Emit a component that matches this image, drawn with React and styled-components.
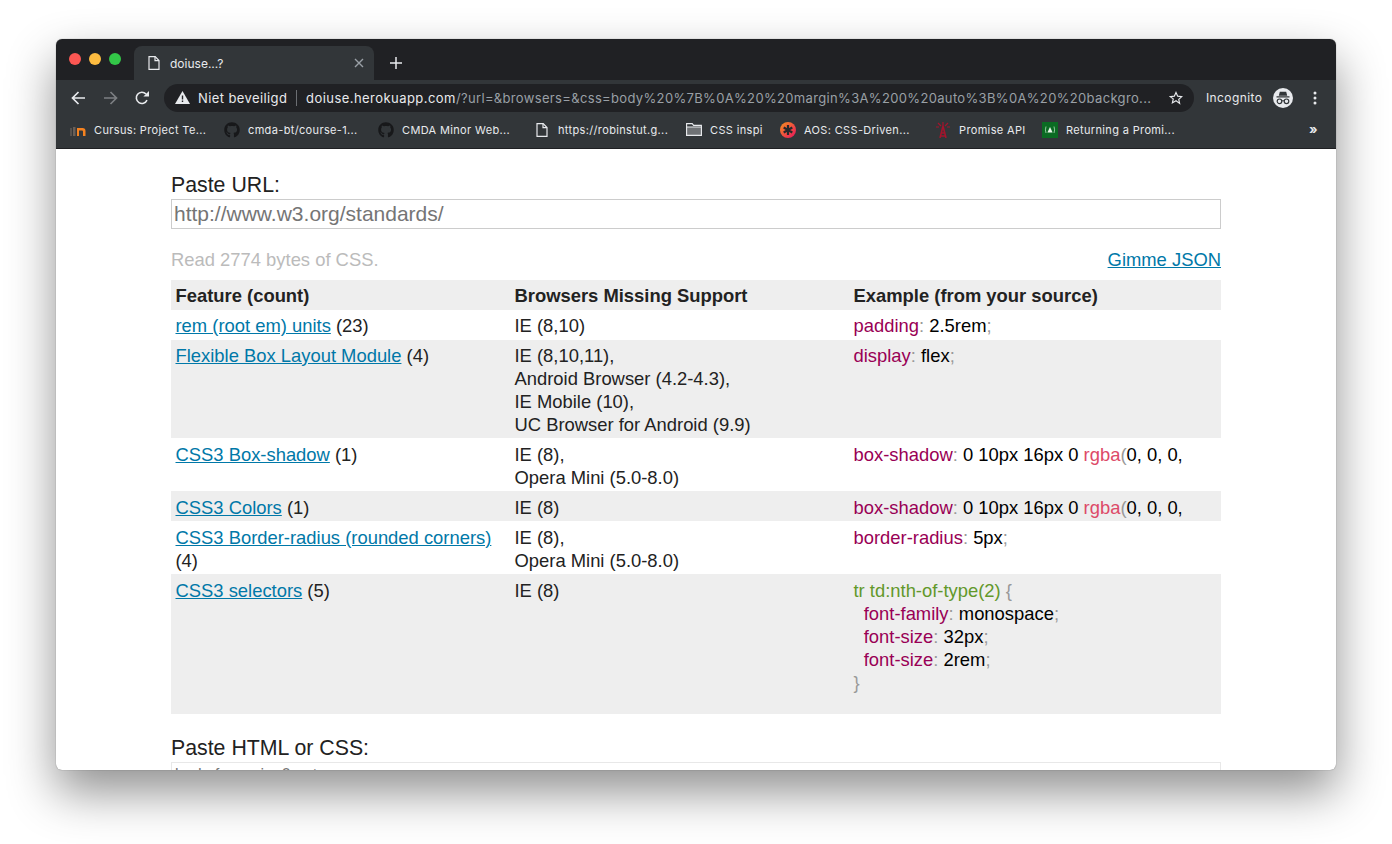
import React from 'react';
import styled, { createGlobalStyle } from 'styled-components';
import { FaGithub } from 'react-icons/fa';

const Global = createGlobalStyle`
  html, body {
    margin: 0;
    padding: 0;
    background: #fff;
  }
  body {
    height: 844px;
    overflow: hidden;
  }
`;

const Stage = styled.div`
  padding: 39px 56px 0;
`;

const Chrome = styled.div`
  width: 1280px;
  height: 731px;
  border-radius: 6px;
  overflow: hidden;
  display: flex;
  flex-direction: column;
  background: #fff;
  box-shadow: 0 0 1px rgba(0, 0, 0, 0.55), 0 22px 48px rgba(0, 0, 0, 0.44);
  font-family: Inter, "Liberation Sans", sans-serif;
`;

/* title strip */
const TabStrip = styled.div`
  height: 41px;
  background: #202124;
  display: flex;
  align-items: flex-end;
  padding-left: 13px;
  flex: none;
`;

const Lights = styled.div`
  display: flex;
  gap: 8px;
  align-self: flex-start;
  margin-top: 14px;
  margin-right: 13px;
`;

const Light = styled.span`
  width: 12px;
  height: 12px;
  border-radius: 50%;
  background: ${(p) => p.$color};
`;

const Tab = styled.div`
  width: 240px;
  height: 34px;
  background: #323639;
  border-radius: 8px 8px 0 0;
  display: flex;
  align-items: center;
  padding: 0 10px 0 14px;
  box-sizing: border-box;
  color: #e8eaed;
  font-size: 12px;
`;

const TabTitle = styled.span`
  flex: 1;
  margin-left: 10px;
`;

const NewTab = styled.div`
  height: 34px;
  margin-left: 16px;
  display: flex;
  align-items: center;
`;

/* toolbar with omnibox */
const Toolbar = styled.div`
  height: 35px;
  background: #323639;
  display: flex;
  align-items: center;
  flex: none;
  padding-left: 15px;
`;

const NavButton = styled.div`
  width: 14px;
  height: 14px;
  margin-right: ${(p) => p.$gap}px;
  display: flex;
`;

const Omnibox = styled.div`
  width: 1030px;
  height: 28px;
  border-radius: 14px;
  background: #202124;
  margin-left: 15px;
  display: flex;
  align-items: center;
  padding-left: 11px;
  box-sizing: border-box;
  flex: none;
`;

const Security = styled.span`
  color: #e8eaed;
  font-size: 13px;
  letter-spacing: 0.4px;
  margin-left: 8px;
  width: 98px;
  white-space: nowrap;
  flex: none;
`;

const Divider = styled.span`
  width: 1px;
  height: 16px;
  background: #6b6e72;
  margin-right: 9px;
  flex: none;
`;

const Url = styled.span`
  font-size: 13px;
  letter-spacing: 0.34px;
  color: #9aa0a6;
  width: 856px;
  white-space: nowrap;
  flex: none;
  b {
    font-weight: 400;
    letter-spacing: 0.45px;
    color: #e8eaed;
  }
`;

const Star = styled.span`
  margin-left: 7px;
  display: flex;
`;

const Incognito = styled.span`
  color: #e8eaed;
  font-size: 12px;
  letter-spacing: 0.4px;
  margin-left: 12px;
  width: 67px;
  white-space: nowrap;
  flex: none;
`;

const Menu = styled.span`
  display: flex;
  margin-left: 20px;
`;

/* bookmarks */
const Bookmarks = styled.div`
  height: 34px;
  background: #323639;
  display: flex;
  align-items: center;
  flex: none;
  padding: 0 0 4px 14px;
  border-bottom: 1px solid #1f2023;
  box-sizing: border-box;
  color: #e8eaed;
  font-size: 11px;
  letter-spacing: 0.35px;
`;

const Bookmark = styled.div`
  width: ${(p) => p.$width}px;
  display: flex;
  align-items: center;
  gap: 8px;
  white-space: nowrap;
  flex: none;
`;

const Fav = styled.span`
  width: 16px;
  height: 16px;
  display: flex;
  align-items: center;
  justify-content: center;
  flex: none;
`;

const More = styled.span`
  margin-left: 20px;
  font-size: 13px;
  font-weight: 700;
  line-height: 13px;
`;

/* page */
const Page = styled.main`
  flex: 1;
  overflow: hidden;
  padding: 23px 115px 0;
  color: #222;
  font-family: "Liberation Sans", Arial, sans-serif;
  font-size: 18.4px;
  line-height: 23px;
`;

const Label = styled.label`
  display: block;
  font-size: 21.3px;
  line-height: 27px;
`;

const UrlField = styled.div`
  height: 30px;
  border: 1px solid #ccc;
  box-sizing: border-box;
  padding-left: 2px;
  color: #757575;
  font-size: 21px;
  line-height: 28px;
`;

const Meta = styled.div`
  display: flex;
  justify-content: space-between;
  margin-top: 19px;
  height: 32px;
`;

const Note = styled.span`
  color: #bbb;
`;

const Link = styled.a`
  color: #0078a8;
  text-decoration: underline;
`;

const Table = styled.table`
  width: 1050px;
  table-layout: fixed;
  border-collapse: collapse;
  margin-bottom: 21px;
`;

const Row = styled.tr`
  background: ${(p) => (p.$shaded ? '#eee' : '#fff')};
  th, td {
    padding-top: ${(p) => p.$top ?? 4}px;
    padding-bottom: ${(p) => p.$bottom ?? 3}px;
  }
`;

const Head = styled.th`
  text-align: left;
  font-weight: 700;
  padding-left: 4.5px;
  padding-right: 4.5px;
  width: ${(p) => p.$width}px;
  box-sizing: border-box;
`;

const Cell = styled.td`
  vertical-align: top;
  padding-left: 4.5px;
  padding-right: 4.5px;
  overflow: hidden;
  white-space: ${(p) => (p.$code ? 'nowrap' : 'normal')};
  color: ${(p) => (p.$code ? '#000' : '#222')};
`;

const CodeBlock = styled.div`
  padding-bottom: 18px;
  white-space: pre;
`;

const Prop = styled.span`
  color: #990055;
`;

const Punct = styled.span`
  color: #999;
`;

const Fn = styled.span`
  color: #dd4a68;
`;

const Selector = styled.span`
  color: #62982a;
`;

const Paste = styled.div`
  height: 30px;
  border: 1px solid #e8e8e8;
  box-sizing: border-box;
  color: #757575;
  font-size: 16px;
  line-height: 18px;
  padding: 3px 0 0 3px;
`;

const DocIcon = ({ stroke = '#e8eaed' }) => (
  <svg width="12" height="14" viewBox="0 0 12 14" fill="none" stroke={stroke} strokeWidth="1.2">
    <path d="M1 .7h6.2L11 4.5v8.8H1z" />
    <path d="M7 .7v4h4" />
  </svg>
);

const Code = ({ name, children }) => (
  <>
    <Prop>{name}</Prop>
    <Punct>:</Punct> {children}
    <Punct>;</Punct>
  </>
);

const Shadow = () => (
  <>
    <Prop>box-shadow</Prop>
    <Punct>:</Punct> 0 10px 16px 0 <Fn>rgba</Fn>
    <Punct>(</Punct>0, 0, 0,
  </>
);

export default function App() {
  return (
    <Stage>
      <Global />
      <Chrome>
        <TabStrip>
          <Lights>
            <Light $color="#fc5753" />
            <Light $color="#fdbc40" />
            <Light $color="#33c748" />
          </Lights>
          <Tab>
            <DocIcon />
            <TabTitle>doiuse...?</TabTitle>
            <svg width="10" height="10" viewBox="0 0 10 10" stroke="#9aa0a6" strokeWidth="1.4">
              <path d="M1 1l8 8M9 1l-8 8" />
            </svg>
          </Tab>
          <NewTab>
            <svg width="12" height="12" viewBox="0 0 12 12" stroke="#e8eaed" strokeWidth="1.5">
              <path d="M6 0v12M0 6h12" />
            </svg>
          </NewTab>
        </TabStrip>

        <Toolbar>
          <NavButton $gap={19}>
            <svg width="14" height="14" viewBox="0 0 14 14" fill="none" stroke="#e8eaed" strokeWidth="1.7">
              <path d="M14 7H1.5M7.5 1L1.5 7l6 6" />
            </svg>
          </NavButton>
          <NavButton $gap={17}>
            <svg width="14" height="14" viewBox="0 0 14 14" fill="none" stroke="#7c7f82" strokeWidth="1.7">
              <path d="M0 7h12.5M6.5 1l6 6-6 6" />
            </svg>
          </NavButton>
          <NavButton $gap={0}>
            <svg width="14" height="14" viewBox="0 0 14 14" fill="none">
              <path d="M12 9.2A5.6 5.6 0 1 1 11 3" stroke="#e8eaed" strokeWidth="1.6" />
              <path d="M14 0v5.6H8.4z" fill="#e8eaed" />
            </svg>
          </NavButton>
          <Omnibox>
            <svg width="15" height="13" viewBox="0 0 15 13">
              <path d="M7.5 0L15 13H0z" fill="#e8eaed" />
              <path d="M6.8 4.5h1.4v4H6.8zM6.8 9.5h1.4v1.4H6.8z" fill="#202124" />
            </svg>
            <Security>Niet beveiligd</Security>
            <Divider />
            <Url>
              <b>doiuse.herokuapp.com</b>/?url=&browsers=&css=body%20%7B%0A%20%20margin%3A%200%20auto%3B%0A%20%20backgro...
            </Url>
            <Star>
              <svg width="14" height="14" viewBox="0 0 24 24" fill="none" stroke="#e8eaed" strokeWidth="2">
                <path d="M12 2.5l2.9 6.4 7 .7-5.2 4.7 1.5 6.9L12 16.8l-6.2 3.6 1.5-6.9L2.1 9.6l7-.7z" />
              </svg>
            </Star>
          </Omnibox>
          <Incognito>Incognito</Incognito>
          <svg width="20" height="20" viewBox="0 0 20 20">
            <circle cx="10" cy="10" r="10" fill="#e8eaed" />
            <path d="M6.8 3.8h6.4l1 4H5.800zM3.500 8.300h13v1.200h-13z" fill="#323639" />
            <circle cx="6.500" cy="13.300" r="2.300" fill="none" stroke="#323639" strokeWidth="1.2" />
            <circle cx="13.500" cy="13.300" r="2.300" fill="none" stroke="#323639" strokeWidth="1.2" />
            <path d="M8.800 12.800h2.400" stroke="#323639" strokeWidth="1" />
          </svg>
          <Menu>
            <svg width="4" height="14" viewBox="0 0 4 14" fill="#e8eaed">
              <circle cx="2" cy="2" r="1.5" />
              <circle cx="2" cy="7" r="1.5" />
              <circle cx="2" cy="12" r="1.5" />
            </svg>
          </Menu>
        </Toolbar>

        <Bookmarks>
          <Bookmark $width={154}>
            <Fav>
              <svg width="16" height="12" viewBox="0 0 16 12">
                <path d="M0 4h2v8H0z" fill="#55514e" />
                <path d="M3 3h2.500v9H3z" fill="#6a5f57" />
                <path d="M7 4h2v8H7zM9 4h3.500a3 3 0 0 1 3 3v5H13V7.500a1 1 0 0 0-1-1H9z" fill="#f58220" />
              </svg>
            </Fav>
            Cursus: Project Te...
          </Bookmark>
          <Bookmark $width={154}>
            <Fav>
              <FaGithub size={16} color="#17181a" />
            </Fav>
            cmda-bt/course-1...
          </Bookmark>
          <Bookmark $width={156}>
            <Fav>
              <FaGithub size={16} color="#17181a" />
            </Fav>
            CMDA Minor Web...
          </Bookmark>
          <Bookmark $width={152}>
            <Fav>
              <DocIcon />
            </Fav>
            https://robinstut.g...
          </Bookmark>
          <Bookmark $width={94}>
            <Fav>
              <svg width="16" height="13" viewBox="0 0 16 13" fill="none" stroke="#e8eaed" strokeWidth="1.1">
                <path d="M.6.6h5.600l1.400 1.800h7.800v10H.6z" />
                <path d="M.6 4h14.800V12.400H.6z" fill="#6f7275" />
              </svg>
            </Fav>
            CSS inspi
          </Bookmark>
          <Bookmark $width={155}>
            <Fav>
              <svg width="16" height="16" viewBox="0 0 16 16">
                <defs>
                  <linearGradient id="aos" x1="0" y1="0" x2="1" y2="1">
                    <stop offset="0" stopColor="#f7931e" />
                    <stop offset="1" stopColor="#e8115e" />
                  </linearGradient>
                </defs>
                <circle cx="8" cy="8" r="8" fill="url(#aos)" />
                <path d="M8 3v10M3.700 5.500l8.600 5M12.300 5.500l-8.600 5" stroke="#26282b" strokeWidth="2.2" />
              </svg>
            </Fav>
            AOS: CSS-Driven...
          </Bookmark>
          <Bookmark $width={107}>
            <Fav>
              <svg width="14" height="16" viewBox="0 0 14 16" fill="none" stroke="#a3142c" strokeWidth="1.2">
                <path d="M7 4L4 16M7 4l3 12M5 11h4M4.500 14h5" strokeWidth="1.6" />
                <path d="M7 0v4M2 1l3 3M12 1L9 4M0 5h3M11 5h3" />
              </svg>
            </Fav>
            Promise API
          </Bookmark>
          <Bookmark $width={247}>
            <Fav>
              <svg width="16" height="16" viewBox="0 0 16 16">
                <path d="M0 0h16v16H0z" fill="#0b6b23" />
                <path d="M8 5l2.600 5.500H5.400z" fill="#e8f5e9" />
                <path d="M4 4.500Q2.800 8 4 11M12 4.500Q13.200 8 12 11" fill="none" stroke="#9fd3aa" strokeWidth=".9" />
              </svg>
            </Fav>
            Returning a Promi...
          </Bookmark>
          <More>»</More>
        </Bookmarks>

        <Page>
          <Label>Paste URL:</Label>
          <UrlField>http://www.w3.org/standards/</UrlField>
          <Meta>
            <Note>Read 2774 bytes of CSS.</Note>
            <Link href="#">Gimme JSON</Link>
          </Meta>
          <Table>
            <thead>
              <Row $shaded>
                <Head $width={339}>Feature (count)</Head>
                <Head $width={339}>Browsers Missing Support</Head>
                <Head $width={372}>Example (from your source)</Head>
              </Row>
            </thead>
            <tbody>
              <Row>
                <Cell><Link href="#">rem (root em) units</Link> (23)</Cell>
                <Cell>IE (8,10)</Cell>
                <Cell $code><Code name="padding">2.5rem</Code></Cell>
              </Row>
              <Row $shaded $bottom={2}>
                <Cell><Link href="#">Flexible Box Layout Module</Link> (4)</Cell>
                <Cell>
                  IE (8,10,11),<br />
                  Android Browser (4.2-4.3),<br />
                  IE Mobile (10),<br />
                  UC Browser for Android (9.9)
                </Cell>
                <Cell $code><Code name="display">flex</Code></Cell>
              </Row>
              <Row $top={5} $bottom={2}>
                <Cell><Link href="#">CSS3 Box-shadow</Link> (1)</Cell>
                <Cell>IE (8),<br />Opera Mini (5.0-8.0)</Cell>
                <Cell $code><Shadow /></Cell>
              </Row>
              <Row $shaded $top={5} $bottom={2}>
                <Cell><Link href="#">CSS3 Colors</Link> (1)</Cell>
                <Cell>IE (8)</Cell>
                <Cell $code><Shadow /></Cell>
              </Row>
              <Row $top={5} $bottom={2}>
                <Cell><Link href="#">CSS3 Border-radius (rounded corners)</Link> (4)</Cell>
                <Cell>IE (8),<br />Opera Mini (5.0-8.0)</Cell>
                <Cell $code><Code name="border-radius">5px</Code></Cell>
              </Row>
              <Row $shaded $top={5} $bottom={2}>
                <Cell><Link href="#">CSS3 selectors</Link> (5)</Cell>
                <Cell>IE (8)</Cell>
                <Cell $code>
                  <CodeBlock>
                    <Selector>tr td:nth-of-type(2)</Selector> <Punct>{'{'}</Punct>{'\n'}
                    {'  '}<Code name="font-family">monospace</Code>{'\n'}
                    {'  '}<Code name="font-size">32px</Code>{'\n'}
                    {'  '}<Code name="font-size">2rem</Code>{'\n'}
                    <Punct>{'}'}</Punct>
                  </CodeBlock>
                </Cell>
              </Row>
            </tbody>
          </Table>
          <Label>Paste HTML or CSS:</Label>
          <Paste>{'body { margin: 0 auto;'}</Paste>
        </Page>
      </Chrome>
    </Stage>
  );
}
